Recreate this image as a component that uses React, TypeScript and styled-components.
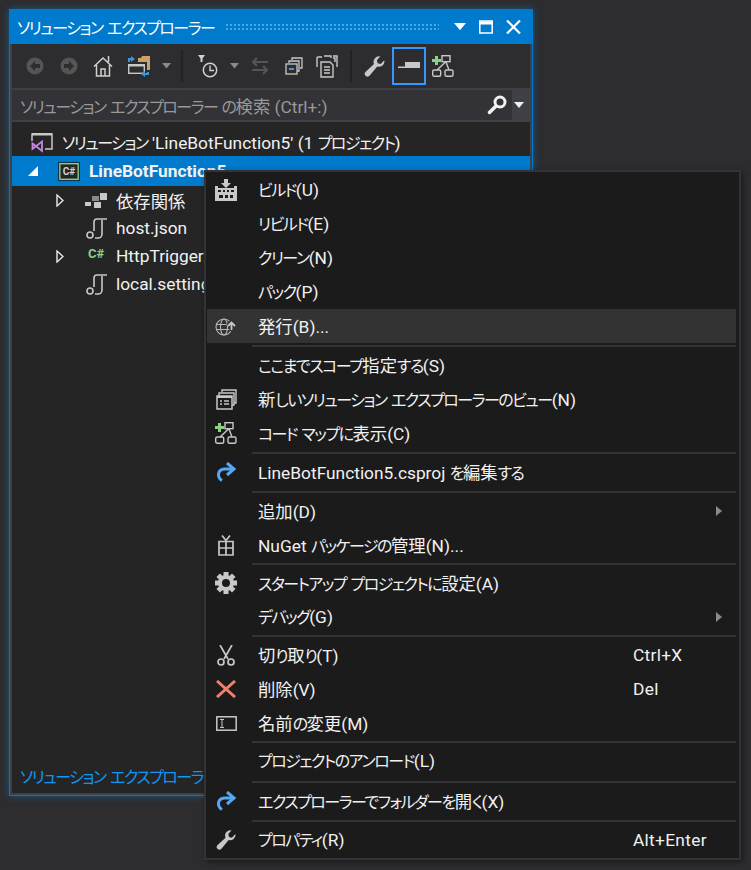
import React from "react";
import styled, { createGlobalStyle } from "styled-components";

const GlobalStyle = createGlobalStyle`
  html, body {
    margin: 0;
    padding: 0;
    background: #2d2d30;
  }
  #root {
    width: 751px;
    height: 870px;
    overflow: hidden;
  }
`;

const FONT = `Roboto, "Noto Sans CJK JP", sans-serif`;

const Page = styled.div`
  position: relative;
  width: 751px;
  height: 870px;
  padding: 9px 0 0 9px;
  box-sizing: border-box;
  background: #2d2d30;
  font-family: ${FONT};
  font-size: 17.33px;
  font-feature-settings: "palt";
  color: #f1f1f1;
`;

// the original UI font has much narrower kana than its kanji
const KanaRun = styled.span`
  font-size: 16px;
  letter-spacing: -1.5px;
`;

const Jp = ({ text }: { text: string }) => (
  <span>
    {text.split(/([\u3040-\u30ff]+)/).map((part, i) =>
      i % 2 ? <KanaRun key={i}>{part}</KanaRun> : part
    )}
  </span>
);

const Win = styled.div`
  width: 524px;
  height: 787px;
  box-sizing: border-box;
  display: flex;
  flex-direction: column;
  border: 1px solid #007acc;
  border-top: 0;
  background: #3f3f46;
  box-shadow: 0 0 7px rgba(0, 122, 204, 0.55);
`;

const TitleBar = styled.div`
  height: 35px;
  flex: none;
  margin: 0 -1px;
  padding: 0 12px 0 8px;
  display: flex;
  align-items: center;
  background: #007acc;
  color: #fff;
`;

const TitleText = styled.span`
  width: 208px;
  flex: none;
  white-space: nowrap;
`;

const Gripper = styled.div`
  width: 214px;
  height: 8px;
  background-image: radial-gradient(#4ea6e0 0.8px, transparent 1px);
  background-size: 4px 4px;
`;

const TitleIcons = styled.div`
  margin-left: auto;
  display: flex;
  align-items: center;
  gap: 13px;
`;

const Body = styled.div`
  flex: 1;
  min-height: 0;
  margin: 0 2px 2px;
  display: flex;
  flex-direction: column;
  background: #252526;
`;

const Toolbar = styled.div`
  height: 44px;
  flex: none;
  display: flex;
  align-items: center;
  padding-left: 6px;
  background: #2d2d30;
`;

const ToolBtn = styled.div<{ $w: number; $active?: boolean }>`
  width: ${(p) => p.$w}px;
  height: 38px;
  flex: none;
  box-sizing: border-box;
  display: flex;
  align-items: center;
  justify-content: center;
  border: 2px solid ${(p) => (p.$active ? "#3399ff" : "transparent")};
`;

const ToolSep = styled.div<{ $l: number; $r: number }>`
  width: 2px;
  height: 32px;
  margin: 0 ${(p) => p.$r}px 0 ${(p) => p.$l}px;
  flex: none;
  background: #222;
`;

const SearchRow = styled.div`
  height: 34px;
  flex: none;
  box-sizing: border-box;
  padding: 2px 0;
  display: flex;
  align-items: stretch;
  background: #3f3f46;
`;

const SearchBox = styled.div`
  width: 500px;
  box-sizing: border-box;
  padding: 0 5px 0 8px;
  display: flex;
  align-items: center;
  justify-content: space-between;
  background: #333337;
  color: #999;
  white-space: nowrap;
`;

const SearchDrop = styled.div`
  flex: 1;
  padding-right: 4px;
  display: flex;
  align-items: center;
  justify-content: center;
`;

const Tree = styled.div`
  flex: 1;
  padding-top: 6px;
`;

const TreeRow = styled.div<{ $selected?: boolean; $indent: number }>`
  height: ${(p) => (p.$selected ? 30 : 28)}px;
  display: flex;
  align-items: center;
  padding-left: ${(p) => p.$indent}px;
  background: ${(p) => (p.$selected ? "#007acc" : "transparent")};
  font-weight: ${(p) => (p.$selected ? 700 : 400)};
  white-space: nowrap;
`;

const TreeExpander = styled.div`
  width: 28px;
  flex: none;
  margin-right: 11px;
  display: flex;
  align-items: center;
  justify-content: center;
`;

const TreeIcon = styled.div`
  width: 22px;
  flex: none;
  margin-right: 9px;
  display: flex;
  align-items: center;
  justify-content: center;
`;

const StatusLink = styled.div`
  height: 34px;
  flex: none;
  padding-left: 8px;
  display: flex;
  align-items: center;
  color: #0e97f5;
  white-space: nowrap;
`;

const Menu = styled.div`
  position: absolute;
  left: 204px;
  top: 170px;
  width: 537px;
  height: 690px;
  box-sizing: border-box;
  padding: 1px 3px 0 1px;
  background: #1b1b1c;
  border: 2px solid #333337;
  box-shadow: 2px 2px 6px rgba(0, 0, 0, 0.45);
`;

const MenuRow = styled.div<{ $hover?: boolean }>`
  height: 34px;
  display: flex;
  align-items: center;
  background: ${(p) => (p.$hover ? "#333334" : "transparent")};
  white-space: nowrap;
`;

const MenuIcon = styled.div`
  width: 38px;
  flex: none;
  margin-right: 13px;
  display: flex;
  align-items: center;
  justify-content: center;
`;

const MenuLabel = styled.span`
  flex: 1;
  padding-bottom: 2px;
`;

const Shortcut = styled.span`
  width: 103px;
  flex: none;
  letter-spacing: 0.3px;
`;

const SubArrow = styled.span`
  width: 0;
  height: 0;
  margin-right: 14px;
  border-left: 6px solid #8a8a8a;
  border-top: 5px solid transparent;
  border-bottom: 5px solid transparent;
`;

const MenuSep = styled.div<{ $top: number }>`
  height: 2px;
  margin: ${(p) => p.$top}px 0 1px 45px;
  background: #333337;
`;

const Caret = ({ color = "#f1f1f1", w = 10 }: { color?: string; w?: number }) => (
  <svg width={w} height={w * 0.6} viewBox="0 0 10 6">
    <path d="M0 0h10L5 6z" fill={color} />
  </svg>
);

const BackIcon = ({ flip }: { flip?: boolean }) => (
  <svg width="18" height="18" viewBox="0 0 18 18" style={flip ? { transform: "scaleX(-1)" } : undefined}>
    <circle cx="9" cy="9" r="8.5" fill="#555" />
    <path d="M9 4 4 9l5 5V11h5V7H9z" fill="#2d2d30" />
  </svg>
);

const HomeIcon = () => (
  <svg width="20" height="22" viewBox="0 0 20 22" fill="none" stroke="#d0d0d0" strokeWidth="1.5">
    <path d="M1 11.500 10 3l9 8.500M3.500 10v11h13V10M8 21v-7h4v7M15.500 7V1" />
  </svg>
);

const SyncIcon = () => (
  <svg width="24" height="22" viewBox="0 0 24 22">
    <path d="M11 3h3l1-2h8v14h-3V7h-9z" fill="#c8a468" />
    <rect x="1.700" y="9.700" width="15.600" height="8.600" fill="#2d2d30" stroke="#c8c8c8" strokeWidth="1.400" />
    <path d="M1 9h17v2.500H1z" fill="#c8c8c8" />
    <path d="M1 7V3h3V1l4 3-4 3V5H3v2zM22 17v3h-4v2l-4-3 4-3v2h2v-1z" fill="#3a96dd" />
  </svg>
);

const HistoryIcon = () => (
  <svg width="20" height="23" viewBox="0 0 20 23" fill="none">
    <path d="M0 0h7L4.500 3.500V7h-2V3.500z" fill="#d0d0d0" />
    <circle cx="12" cy="15" r="6.700" stroke="#d0d0d0" strokeWidth="1.500" />
    <path d="M12 10.500V15.500H16" stroke="#d0d0d0" strokeWidth="1.400" />
  </svg>
);

const SwapIcon = () => (
  <svg width="18" height="18" viewBox="0 0 18 18" fill="none" stroke="#555" strokeWidth="2">
    <path d="M6 1 2 5l4 4M2 5h15M12 9l4 4-4 4M16 13H1" />
  </svg>
);

const CollapseIcon = () => (
  <svg width="18" height="18" viewBox="0 0 18 18" fill="none" stroke="#c8c8c8" strokeWidth="1.300">
    <path d="M7 3V1h10v10h-2" />
    <path d="M4 6V4h10v10h-2" />
    <rect x="1" y="7" width="11" height="10" />
    <path d="M4 12h5" stroke="#4fa3e3" strokeWidth="1.800" />
  </svg>
);

const ShowAllIcon = ({ bg = "#2d2d30" }: { bg?: string }) => (
  <svg width="22" height="23" viewBox="0 0 22 23" fill="none" stroke="#c8c8c8" strokeWidth="1.400">
    <path d="M8 1h7v2M17 1h4v11" />
    <path d="M1 12V3a1 1 0 0 1 1-1h4M17 3h2v4" />
    <path d="M5 7h9l3 3v12H5z" fill={bg} />
    <path d="M8 12h6M8 15h6M8 18h6" />
  </svg>
);

const NewViewIcon = () => (
  <svg width="21" height="21" viewBox="0 0 21 21" fill="none" stroke="#c8c8c8" strokeWidth="1.400">
    <path d="M6 3V1h14v13h-2" />
    <path d="M3 7V4h15v12h-2" />
    <rect x="1" y="7" width="15" height="13" strokeWidth="1.500" />
    <path d="M1 8h15" strokeWidth="2" />
    <path d="M4 12h2M8 12h5M4 15h2M8 15h5" />
  </svg>
);

const WrenchIcon = ({ size = 21 }: { size?: number }) => (
  <svg width={size} height={size} viewBox="0 0 22 22">
    <path
      d="M21.500 5.500a5.800 5.800 0 0 1-7.600 5.400L6 20.500a2.800 2.800 0 0 1-4.500-3.800L10.500 8.500A5.800 5.800 0 0 1 17 .500L13.500 4.500l.8 3.200 3.200.8 3.500-3.800z"
      fill="#c8c8c8"
    />
  </svg>
);

const PreviewIcon = () => (
  <svg width="22" height="8" viewBox="0 0 22 8">
    <path d="M7 0h15v6H0V4.500h7z" fill="#c8c8c8" />
  </svg>
);

const CodeMapIcon = () => (
  <svg width="22" height="22" viewBox="0 0 22 22" fill="none">
    <rect x="10" y="0.700" width="8" height="6" stroke="#c8c8c8" strokeWidth="1.400" />
    <rect x="0.700" y="15" width="8" height="6.300" rx="1.500" stroke="#c8c8c8" strokeWidth="1.400" />
    <rect x="13" y="15" width="8" height="6.300" rx="1.500" stroke="#c8c8c8" strokeWidth="1.400" />
    <path d="M13.500 7 5 15M14 7l3 8" stroke="#c8c8c8" strokeWidth="1.400" />
    <path d="M3 1h3v3h3v3H6v3H3V7H0V4h3z" fill="#89d185" />
  </svg>
);

const SearchIcon = () => (
  <svg width="20" height="20" viewBox="0 0 20 20" fill="none" stroke="#f1f1f1">
    <circle cx="13" cy="7" r="5" strokeWidth="3" />
    <path d="M9 11 2.500 17.500" strokeWidth="3.500" strokeLinecap="round" />
  </svg>
);

const CloseIcon = () => (
  <svg width="15" height="14" viewBox="0 0 15 14" stroke="#fff" strokeWidth="2.200">
    <path d="M1 0.500l13 13M14 0.500l-13 13" />
  </svg>
);

const MaxIcon = () => (
  <svg width="14" height="14" viewBox="0 0 14 14" fill="none" stroke="#fff">
    <rect x="0.800" y="1" width="12.400" height="12" strokeWidth="1.500" />
    <path d="M1 3h12" strokeWidth="3" />
  </svg>
);

const SolutionIcon = () => (
  <svg width="22" height="21" viewBox="0 0 22 21" fill="none">
    <path d="M1 9V2h20v15h-7" stroke="#c8c8c8" strokeWidth="1.500" />
    <path d="M1 1h20v2.500H1z" fill="#c8c8c8" />
    <path d="M1.500 11.500 11 19V9.500L1.500 17z" stroke="#c586e8" strokeWidth="1.800" />
  </svg>
);

const CsProjIcon = () => (
  <svg width="24" height="21" viewBox="0 0 24 21">
    <rect x="0.500" y="0.500" width="23" height="20" fill="#1b1b1c" stroke="#12324a" />
    <rect x="2" y="2" width="20" height="17" fill="#252526" stroke="#89d185" strokeWidth="1.500" />
    <text x="12" y="14.500" textAnchor="middle" fontSize="11" fontWeight="700" fill="#d0d0d0" fontFamily={FONT}>
      C#
    </text>
  </svg>
);

const DepsIcon = () => (
  <svg width="22" height="15" viewBox="0 0 22 15">
    <rect x="15" y="0" width="7" height="7" fill="#c8c8c8" />
    <rect x="7" y="3" width="7" height="5" fill="#8a8a8a" />
    <rect x="0" y="9" width="6" height="4" fill="#c8c8c8" />
    <rect x="9" y="9" width="7" height="6" fill="#c8c8c8" />
  </svg>
);

const JsonIcon = () => (
  <svg width="21" height="21" viewBox="0 0 21 21" fill="none" stroke="#c8c8c8" strokeWidth="1.600">
    <path d="M8 13V4a3 3 0 0 1 3-3h10M16 2v14a4 4 0 0 1-4 4h-3" />
    <circle cx="4" cy="17" r="3" />
  </svg>
);

const CsFileText = styled.span`
  font-size: 13px;
  font-weight: 700;
  color: #89d185;
  position: relative;
  top: -3px;
`;

const BuildIcon = () => (
  <svg width="22" height="22" viewBox="0 0 22 22" fill="#c8c8c8">
    <path d="M9 0h4v4h3l-5 5-5-5h3z" />
    <path d="M0 7h3v2h16V7h3v15H0z" />
    <path d="M3 11h3v2H3zM8 11h2v2H8zM12 11h2v2h-2zM16 11h3v2h-3zM4 16h4v3H4zM10 16h3v3h-3zM15 16h3v3h-3z" fill="#1b1b1c" />
  </svg>
);

const PublishIcon = () => (
  <svg width="22" height="19" viewBox="0 0 22 19" fill="none" stroke="#b8b8b8" strokeWidth="1.100">
    <circle cx="9" cy="10" r="8" />
    <ellipse cx="9" cy="10" rx="3.500" ry="8" />
    <path d="M1 7.500h16M1 12.500h16" />
    <path d="M16.500 14V6M13 9l3.500-3.500L20 9" stroke="#333334" strokeWidth="4.500" />
    <path d="M16.500 13V6M13 9l3.500-3.500L20 9" strokeWidth="1.800" stroke="#c8c8c8" />
  </svg>
);

const RedoIcon = () => (
  <svg width="21" height="20" viewBox="0 0 21 20" fill="none" stroke="#55a8f5" strokeWidth="3">
    <path d="M6 18.500C1 15.500 1 8 8 7h10" />
    <path d="M11 1l7 6-7 6" />
  </svg>
);

const GiftIcon = () => (
  <svg width="16" height="21" viewBox="0 0 16 21" fill="none" stroke="#c8c8c8" strokeWidth="1.700">
    <path d="M1 6.500h14v13.500H1zM1 13h14M8 6.500V20" />
    <path d="M4 0.500l4 5 4-5" />
  </svg>
);

const GearIcon = () => (
  <svg width="22" height="22" viewBox="0 0 22 22">
    <g fill="#c8c8c8">
      {[0, 45, 90, 135, 180, 225, 270, 315].map((a) => (
        <rect key={a} x="8.500" y="0" width="5" height="5" transform={`rotate(${a} 11 11)`} />
      ))}
    </g>
    <circle cx="11" cy="11" r="6" fill="none" stroke="#c8c8c8" strokeWidth="4" />
  </svg>
);

const ScissorsIcon = () => (
  <svg width="18" height="21" viewBox="0 0 18 21" fill="none" stroke="#c8c8c8" strokeWidth="1.700">
    <path d="M3 0l8 14M15 0 7 14" />
    <circle cx="4" cy="17" r="3" />
    <circle cx="14" cy="17" r="3" />
  </svg>
);

const DeleteIcon = () => (
  <svg width="20" height="18" viewBox="0 0 20 18" stroke="#f07f6d" strokeWidth="3">
    <path d="M1 1l18 16M19 1 1 17" />
  </svg>
);

const RenameIcon = () => (
  <svg width="21" height="15" viewBox="0 0 21 15" fill="none" stroke="#c8c8c8">
    <rect x="0.800" y="0.800" width="19.400" height="13.400" strokeWidth="1.500" />
    <path d="M4 3.500h4M4 11.500h4M6 3.500v8" strokeWidth="1" />
  </svg>
);

type Item = {
  label?: string;
  icon?: React.ReactNode;
  shortcut?: string;
  sub?: boolean;
  hover?: boolean;
  sepTop?: number;
};

const items: Item[] = [
  { label: "ビルド(U)", icon: <BuildIcon /> },
  { label: "リビルド(E)" },
  { label: "クリーン(N)" },
  { label: "パック(P)" },
  { label: "発行(B)...", icon: <PublishIcon />, hover: true },
  { sepTop: 2 },
  { label: "ここまでスコープ指定する(S)" },
  { label: "新しいソリューション エクスプローラーのビュー(N)", icon: <NewViewIcon /> },
  { label: "コード マップに表示(C)", icon: <CodeMapIcon /> },
  { sepTop: 2 },
  { label: "LineBotFunction5.csproj を編集する", icon: <RedoIcon /> },
  { sepTop: 2 },
  { label: "追加(D)", sub: true },
  { label: "NuGet パッケージの管理(N)...", icon: <GiftIcon /> },
  { sepTop: 1 },
  { label: "スタートアップ プロジェクトに設定(A)", icon: <GearIcon /> },
  { label: "デバッグ(G)", sub: true },
  { sepTop: 1 },
  { label: "切り取り(T)", icon: <ScissorsIcon />, shortcut: "Ctrl+X" },
  { label: "削除(V)", icon: <DeleteIcon />, shortcut: "Del" },
  { label: "名前の変更(M)", icon: <RenameIcon /> },
  { sepTop: 1 },
  { label: "プロジェクトのアンロード(L)" },
  { sepTop: 3 },
  { label: "エクスプローラーでフォルダーを開く(X)", icon: <RedoIcon /> },
  { sepTop: 2 },
  { label: "プロパティ(R)", icon: <WrenchIcon size={20} />, shortcut: "Alt+Enter" },
];

const Expander = ({ open }: { open?: boolean }) =>
  open ? (
    <svg width="10" height="10" viewBox="0 0 10 10">
      <path d="M10 0v10H0z" fill="#fff" />
    </svg>
  ) : (
    <svg width="8" height="13" viewBox="0 0 8 13" fill="none" stroke="#e0e0e0" strokeWidth="1.500">
      <path d="M1 1l6 5.500L1 12z" />
    </svg>
  );

export default function App() {
  return (
    <Page>
      <GlobalStyle />
      <Win>
        <TitleBar>
          <TitleText>
            <Jp text="ソリューション エクスプローラー" />
          </TitleText>
          <Gripper />
          <TitleIcons>
            <Caret color="#fff" w={12} />
            <MaxIcon />
            <CloseIcon />
          </TitleIcons>
        </TitleBar>
        <Body>
          <Toolbar>
            <ToolBtn $w={34}>
              <BackIcon />
            </ToolBtn>
            <ToolBtn $w={34}>
              <BackIcon flip />
            </ToolBtn>
            <ToolBtn $w={34}>
              <HomeIcon />
            </ToolBtn>
            <ToolBtn $w={38}>
              <SyncIcon />
            </ToolBtn>
            <ToolBtn $w={16}>
              <Caret color="#8a8a8a" w={9} />
            </ToolBtn>
            <ToolSep $l={7} $r={7} />
            <ToolBtn $w={36}>
              <HistoryIcon />
            </ToolBtn>
            <ToolBtn $w={16}>
              <Caret color="#8a8a8a" w={9} />
            </ToolBtn>
            <ToolBtn $w={36}>
              <SwapIcon />
            </ToolBtn>
            <ToolBtn $w={32}>
              <CollapseIcon />
            </ToolBtn>
            <ToolBtn $w={34}>
              <ShowAllIcon />
            </ToolBtn>
            <ToolSep $l={6} $r={5} />
            <ToolBtn $w={35}>
              <WrenchIcon />
            </ToolBtn>
            <ToolBtn $w={34} $active>
              <PreviewIcon />
            </ToolBtn>
            <ToolBtn $w={34}>
              <CodeMapIcon />
            </ToolBtn>
          </Toolbar>
          <SearchRow>
            <SearchBox>
              <Jp text="ソリューション エクスプローラー の検索 (Ctrl+:)" />
              <SearchIcon />
            </SearchBox>
            <SearchDrop>
              <Caret />
            </SearchDrop>
          </SearchRow>
          <Tree>
            <TreeRow $indent={19}>
              <TreeIcon>
                <SolutionIcon />
              </TreeIcon>
              <Jp text="ソリューション 'LineBotFunction5' (1 プロジェクト)" />
            </TreeRow>
            <TreeRow $selected $indent={7}>
              <TreeExpander>
                <Expander open />
              </TreeExpander>
              <TreeIcon>
                <CsProjIcon />
              </TreeIcon>
              LineBotFunction5
            </TreeRow>
            <TreeRow $indent={34}>
              <TreeExpander>
                <Expander />
              </TreeExpander>
              <TreeIcon>
                <DepsIcon />
              </TreeIcon>
              依存関係
            </TreeRow>
            <TreeRow $indent={73}>
              <TreeIcon>
                <JsonIcon />
              </TreeIcon>
              host.json
            </TreeRow>
            <TreeRow $indent={34}>
              <TreeExpander>
                <Expander />
              </TreeExpander>
              <TreeIcon>
                <CsFileText>C#</CsFileText>
              </TreeIcon>
              HttpTrigger.cs
            </TreeRow>
            <TreeRow $indent={73}>
              <TreeIcon>
                <JsonIcon />
              </TreeIcon>
              local.settings.json
            </TreeRow>
          </Tree>
          <StatusLink>
            <Jp text="ソリューション エクスプローラー" />
          </StatusLink>
        </Body>
      </Win>
      <Menu>
        {items.map((it, i) =>
          it.sepTop !== undefined ? (
            <MenuSep key={i} $top={it.sepTop} />
          ) : (
            <MenuRow key={i} $hover={it.hover}>
              <MenuIcon>{it.icon}</MenuIcon>
              <MenuLabel>
                <Jp text={it.label ?? ""} />
              </MenuLabel>
              {it.shortcut && <Shortcut>{it.shortcut}</Shortcut>}
              {it.sub && <SubArrow />}
            </MenuRow>
          )
        )}
      </Menu>
    </Page>
  );
}
